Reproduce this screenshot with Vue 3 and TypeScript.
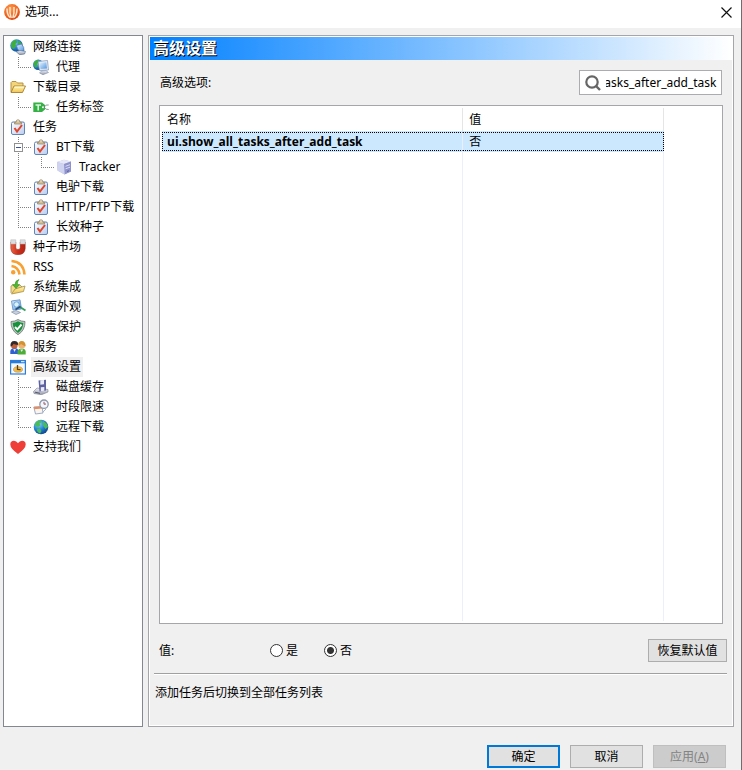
<script setup lang="ts">
import { computed, nextTick, onMounted, ref } from 'vue'

type Guide = 'none' | 'line' | 'tee' | 'end'
interface TreeItem {
  label: string
  icon: string
  guides: Guide[]
  expander?: boolean
}

const items: TreeItem[] = [
  { label: '网络连接', icon: 'network', guides: [] },
  { label: '代理', icon: 'proxy', guides: ['end'] },
  { label: '下载目录', icon: 'folder', guides: [] },
  { label: '任务标签', icon: 'tag', guides: ['end'] },
  { label: '任务', icon: 'task', guides: [] },
  { label: 'BT下载', icon: 'task', guides: ['tee'], expander: true },
  { label: 'Tracker', icon: 'server', guides: ['line', 'end'] },
  { label: '电驴下载', icon: 'task', guides: ['tee'] },
  { label: 'HTTP/FTP下载', icon: 'task', guides: ['tee'] },
  { label: '长效种子', icon: 'task', guides: ['end'] },
  { label: '种子市场', icon: 'magnet', guides: [] },
  { label: 'RSS', icon: 'rss', guides: [] },
  { label: '系统集成', icon: 'integrate', guides: [] },
  { label: '界面外观', icon: 'appearance', guides: [] },
  { label: '病毒保护', icon: 'shield', guides: [] },
  { label: '服务', icon: 'users', guides: [] },
  { label: '高级设置', icon: 'advanced', guides: [] },
  { label: '磁盘缓存', icon: 'disk', guides: ['tee'] },
  { label: '时段限速', icon: 'schedule', guides: ['tee'] },
  { label: '远程下载', icon: 'globe', guides: ['end'] },
  { label: '支持我们', icon: 'heart', guides: [] },
]

const options = [{ name: 'ui.show_all_tasks_after_add_task', hint: '添加任务后切换到全部任务列表' }]
const selected = ref('高级设置')
const filter = ref('ui.show_all_tasks_after_add_task')
const value = ref<'是' | '否'>('否')
const filterBox = ref<HTMLInputElement | null>(null)
const matches = computed(() => options.filter((o) => o.name.includes(filter.value)))

onMounted(async () => {
  await nextTick()
  if (filterBox.value) filterBox.value.scrollLeft = filterBox.value.scrollWidth
})
</script>

<template>
  <div class="window">
    <svg class="defs" width="0" height="0" aria-hidden="true">
      <defs>
        <radialGradient id="g-globe" cx=".35" cy=".3" r=".8">
          <stop offset="0" stop-color="#8fd4fb" /><stop offset=".5" stop-color="#2383d6" /><stop offset="1" stop-color="#0d3a80" />
        </radialGradient>
        <linearGradient id="g-folder" x1="0" y1="0" x2="0" y2="1">
          <stop offset="0" stop-color="#fff6b8" /><stop offset="1" stop-color="#f1c34e" />
        </linearGradient>
        <linearGradient id="g-paper" x1="0" y1="0" x2="1" y2="1">
          <stop offset="0" stop-color="#ffffff" /><stop offset="1" stop-color="#b9cdf0" />
        </linearGradient>
        <linearGradient id="g-screen" x1="0" y1="0" x2="1" y2="1">
          <stop offset="0" stop-color="#e6f3ff" /><stop offset="1" stop-color="#4f95e0" />
        </linearGradient>
        <linearGradient id="g-metal" x1="0" y1="0" x2="0" y2="1">
          <stop offset="0" stop-color="#f4f4f8" /><stop offset="1" stop-color="#9598a8" />
        </linearGradient>
        <radialGradient id="g-orange" cx=".4" cy=".3" r=".8">
          <stop offset="0" stop-color="#ff9a4a" /><stop offset=".7" stop-color="#ee5a17" /><stop offset="1" stop-color="#c53c0c" />
        </radialGradient>
        <linearGradient id="g-red" x1="0" y1="0" x2="1" y2="0">
          <stop offset="0" stop-color="#ee6244" /><stop offset=".5" stop-color="#c9301c" /><stop offset="1" stop-color="#b52414" />
        </linearGradient>
      </defs>
      <symbol id="i-network" viewBox="0 0 16 16">
        <circle cx="6.500" cy="6.500" r="6.200" fill="url(#g-globe)" />
        <path d="M1 5Q2 1.500 6 .8L7.500 3 5.500 5 6 7 4 10 1.500 9ZM9 1.500L12 5 10 6 8 4.500Z" fill="#3fae3c" />
        <path d="M6.500 6.500L11.500 5Q14.500 8 14 12L9.500 12.500Q7 10 6.500 6.500Z" fill="url(#g-screen)" stroke="#4f78ac" stroke-width=".7" />
        <path d="M6 12.500L10 11.500 15.500 12.500 14.500 15 9.500 15.700Z" fill="url(#g-metal)" stroke="#47688f" stroke-width=".6" />
      </symbol>
      <symbol id="i-proxy" viewBox="0 0 16 16">
        <circle cx="5.200" cy="5.800" r="5.200" fill="url(#g-globe)" />
        <path d="M.5 4.500Q2 .8 5.500 .8L6 3 4 5 4.500 8 2 8.500Z" fill="#3fae3c" />
        <path d="M5 2.500L14.500 1.500 15.500 11 6.500 11.500Z" fill="#e4ebf5" stroke="#7c93b8" stroke-width=".7" />
        <path d="M6.500 4L13.300 3.200 14 9.500 7.500 10Z" fill="url(#g-screen)" />
        <path d="M8.500 12L13 11.500 15.500 13.500 10 15.700 6.500 14Z" fill="url(#g-metal)" stroke="#6b83a8" stroke-width=".5" />
      </symbol>
      <symbol id="i-folder" viewBox="0 0 16 16">
        <path d="M1 13V3.500L2 2.500H6L7.500 4H13V7" fill="#f4d67a" stroke="#b08a3a" stroke-width=".9" />
        <path d="M1 13.500L4 7H15.500L12.500 13.500Z" fill="url(#g-folder)" stroke="#a87e2c" stroke-width=".9" />
        <path d="M4.700 8H14" stroke="#fffbd2" />
      </symbol>
      <symbol id="i-tag" viewBox="0 0 16 16">
        <path d="M.3 3.500H9L12 6V10.500L9 13H.3Z" fill="#35b044" />
        <path d="M2.500 6H8M5.200 6V11.500" fill="none" stroke="#d9f5dc" stroke-width="1.600" />
        <circle cx="10" cy="8.300" r="1" fill="#fff" />
        <path d="M11 8.300Q13 5 15.700 6M11 8.300Q13 11 15.700 10.500" fill="none" stroke="#6f8078" stroke-width=".8" />
      </symbol>
      <symbol id="i-task" viewBox="0 0 16 16">
        <rect x="1.500" y="3" width="13" height="12.500" rx="1.500" fill="url(#g-paper)" stroke="#6384b6" />
        <path d="M4.500 5V3.300H6Q6 .7 8 .7T10 3.300H11.500V5Z" fill="#d3c29a" stroke="#92805d" stroke-width=".7" />
        <path d="M7.500 2H8.500" stroke="#fff" />
        <path d="M4.500 9L7 12.500 12 6" fill="none" stroke="#e0452a" stroke-width="2" />
      </symbol>
      <symbol id="i-server" viewBox="0 0 16 16">
        <path d="M1 3L8 .8 15 2.500V12.500L8.500 15.500 1.500 11.500Z" fill="#b5b9e2" />
        <path d="M1 3L8 .8 15 2.500 8 5Z" fill="#e6e8f8" />
        <path d="M8 5L15 2.500V12.500L8.500 15.500Z" fill="#8f93cb" />
        <path d="M1 3L8 5 8.500 15.500 1.500 11.500Z" fill="#d0d3ef" />
        <path d="M9.500 7.300L14 5.700M9.500 9.800L14 8.200" stroke="#ececff" stroke-width=".8" />
        <path d="M11 12.500L13 11.700" stroke="#5b5ba8" />
      </symbol>
      <symbol id="i-magnet" viewBox="0 0 16 16">
        <path d="M.8 3H5.800V9Q6 10.500 8 10.500T10.200 9V3H15.200V9.500Q14.800 15.700 8 15.700T.8 9.500Z" fill="url(#g-red)" stroke="#8e2015" stroke-width=".5" />
        <path d="M.8 .8H5.800V5H.8ZM10.200 .8H15.200V5H10.200Z" fill="#dcdde0" stroke="#b3b4b8" stroke-width=".5" />
      </symbol>
      <symbol id="i-rss" viewBox="0 0 16 16">
        <g fill="none" stroke="#f8a032" stroke-width="2.600">
          <path d="M1.500 2Q13.500 3 14.500 15.500" /><path d="M1.500 7Q8.500 8 9.500 15.500" />
        </g>
        <circle cx="3.200" cy="13.300" r="2.200" fill="#f8a032" />
      </symbol>
      <symbol id="i-integrate" viewBox="0 0 16 16">
        <path d="M1 14V7L3 6 5 7 10 6 12 8" fill="#f3dc8c" stroke="#a48e4a" stroke-width=".8" />
        <path d="M1.500 15L5 10 15 7 13.500 12.500Z" fill="url(#g-folder)" stroke="#a48e4a" stroke-width=".8" />
        <path d="M9 .5Q5 1.500 5 5.500H2.500L6 9.500 9.500 5.500H7.300Q7.300 2.500 9 .5Z" fill="#4bb82e" stroke="#2b851c" stroke-width=".5" />
      </symbol>
      <symbol id="i-appearance" viewBox="0 0 16 16">
        <path d="M1.500 2L10 .8 11.500 10 3 11Z" fill="url(#g-screen)" stroke="#6a96c8" stroke-width=".9" />
        <path d="M1.500 13L6 11.500 10.500 13.500 6 15.500Z" fill="#c9d1de" stroke="#7c8ca5" stroke-width=".7" />
        <circle cx="6.500" cy="5.500" r="2.700" fill="#d8f2ff" stroke="#5f95c6" stroke-width=".8" />
        <path d="M10 8L15.500 11.500" stroke="#35a05c" stroke-width="2" />
        <path d="M5.500 10.500L10.500 7.500" stroke="#2a4f78" stroke-width="1.500" />
      </symbol>
      <symbol id="i-shield" viewBox="0 0 16 16">
        <path d="M8 .5Q11 2.500 15 2.500Q15.200 11.500 8 15.700Q.8 11.500 1 2.500Q5 2.500 8 .5Z" fill="#bcc5c0" stroke="#67766e" stroke-width=".8" />
        <path d="M8 2.300Q10.500 3.800 13.300 4Q13 10.500 8 14Q3 10.500 2.700 4Q5.500 3.800 8 2.300Z" fill="#18903c" />
        <path d="M5 8L7.300 10.300 11.500 5.500" fill="none" stroke="#fff" stroke-width="1.900" />
      </symbol>
      <symbol id="i-users" viewBox="0 0 16 16">
        <path d="M.3 15V12Q1 9 4.500 9T8.500 12V15Z" fill="#2f61cf" />
        <path d="M7.500 15.500V12.500Q8 9.500 11.700 9.500T15.700 12.500V15.500Z" fill="#4cae36" />
        <circle cx="4.300" cy="6.500" r="3.300" fill="#c0603a" />
        <path d="M.5 7.500Q0 2 4.300 2T8 6Q5 5.500 3.500 5Q2.500 7 .5 7.500Z" fill="#33292b" />
        <circle cx="11.800" cy="6.500" r="3.300" fill="#efb274" />
        <path d="M8.200 6.500Q8 2 11.800 2T15.700 7.500Q13 6 11 5Q10 6.500 8.200 6.500Z" fill="#d2922f" />
        <path d="M3.200 10L4.500 13 6 10M10.200 10.500L11.700 13 13.200 10.500" fill="#dce8ff" />
      </symbol>
      <symbol id="i-advanced" viewBox="0 0 16 16">
        <rect x=".6" y="1.500" width="14.800" height="13.500" fill="#f5f9ff" stroke="#2f7ed6" stroke-width="1.200" />
        <path d="M0 1H16V4.300H0Z" fill="#2a7cda" />
        <path d="M11 2.600H14.500" stroke="#cfe5ff" stroke-width="1.300" />
        <ellipse cx="8" cy="10.500" rx="4.500" ry="2.800" fill="#f3bb4a" stroke="#a97f2c" stroke-width=".5" />
        <path d="M7.500 6V10.500L10.500 10.700" fill="none" stroke="#5c4213" stroke-width="1.300" />
      </symbol>
      <symbol id="i-disk" viewBox="0 0 16 16">
        <path d="M.5 12.500L4 9 15 10.500V13L8.500 15.700 1 14.500Z" fill="url(#g-metal)" stroke="#7b7f90" stroke-width=".6" />
        <path d="M5.500 1.500L13 .8V11.500L6.500 12.500Z" fill="#5f63a0" />
        <path d="M7.300 1.300L11 1V5.300L7.300 5.700ZM7.800 12.300V8.300L11.300 7.900V11.800Z" fill="#e9ebf8" />
        <path d="M2 13.200L7 14.300" stroke="#565b70" />
      </symbol>
      <symbol id="i-schedule" viewBox="0 0 16 16">
        <path d="M.8 8L9 7.500 10 14 2.500 15Z" fill="#fbf5f0" stroke="#8597b8" stroke-width=".8" />
        <path d="M.8 8L9 7.500 9.300 9.500 1.200 10.300Z" fill="#ec8b5a" />
        <circle cx="11" cy="5.200" r="4.200" fill="#f4f7fc" stroke="#8e98ab" stroke-width="1.300" />
        <path d="M11 2.800V5.200L13 5" fill="none" stroke="#9a5560" />
        <path d="M10 13L13 10" stroke="#a9b2c6" />
      </symbol>
      <symbol id="i-globe" viewBox="0 0 16 16">
        <circle cx="8" cy="8" r="7.300" fill="url(#g-globe)" />
        <path d="M1.500 6Q3 1.500 7.500 1L9 3 6.500 4.500 7.500 6.500 5 8 3.500 7.500ZM10 2Q14.500 4 15 8L12.500 10 10 6.500ZM3.500 10.500L7 9.500 8.500 12 7 14.700Q4.500 14 3.500 10.500Z" fill="#4bbd58" />
      </symbol>
      <symbol id="i-heart" viewBox="0 0 16 16">
        <path d="M8 15Q.3 9.500 .3 5.500Q.3 1.800 4 1.800Q6.500 1.800 8 4.300Q9.500 1.800 12 1.800Q15.700 1.800 15.700 5.500Q15.700 9.500 8 15Z" fill="#ee3e37" />
      </symbol>
    </svg>

    <header class="titlebar">
      <svg class="app-icon" viewBox="0 0 16 16" aria-hidden="true">
        <circle cx="8" cy="8" r="7.900" fill="url(#g-orange)" />
        <path d="M3 4.500Q3 11 6 13.500M6 3Q5.500 9 7.200 14M10 3Q10.500 9 8.800 14M13 4.500Q13 11 10 13.500" fill="none" stroke="#ffe6cf" stroke-width="1.500" />
      </svg>
      <h1 class="title">选项...</h1>
      <button class="close" type="button" aria-label="关闭">
        <svg viewBox="0 0 11 11" aria-hidden="true"><path d="M.5 .5L10.500 10.500M10.500 .5L.5 10.500" stroke="#111" stroke-width="1.200" /></svg>
      </button>
    </header>

    <div class="content">
      <nav class="tree" aria-label="选项">
        <ul role="tree">
          <li
            v-for="item in items"
            :key="item.label"
            class="node"
            role="treeitem"
            :aria-level="item.guides.length + 1"
            :aria-selected="item.label === selected"
            @click="selected = item.label"
          >
            <svg v-for="(guide, n) in item.guides" :key="n" class="guide" viewBox="0 0 23 20" aria-hidden="true">
              <path v-if="guide === 'end'" d="M8.500 0V11" />
              <path v-else d="M8.500 0V20" />
              <path v-if="guide !== 'line'" d="M8 10.500H21" />
              <g v-if="item.expander" class="expander">
                <rect x="4.500" y="6.500" width="8" height="8" />
                <path d="M6 10.500H11" />
              </g>
            </svg>
            <svg class="icon" viewBox="0 0 16 16" aria-hidden="true"><use :href="'#i-' + item.icon" /></svg>
            <span class="label" :class="{ current: item.label === selected }">{{ item.label }}</span>
          </li>
        </ul>
      </nav>

      <main class="panel">
        <h2 class="banner">高级设置</h2>
        <div class="search-row">
          <label for="filter">高级选项:</label>
          <div class="search">
            <svg viewBox="0 0 16 16" aria-hidden="true">
              <circle cx="7" cy="7" r="5.700" fill="none" stroke="#666" stroke-width="2.200" />
              <path d="M11 11L15 15" stroke="#666" stroke-width="2.400" />
            </svg>
            <input id="filter" ref="filterBox" v-model="filter" type="text" spellcheck="false" />
          </div>
        </div>

        <div class="grid">
          <table>
            <colgroup><col class="c-name" /><col class="c-value" /><col /></colgroup>
            <thead>
              <tr><th scope="col">名称</th><th scope="col">值</th><td></td></tr>
            </thead>
            <tbody>
              <tr v-for="option in matches" :key="option.name" class="picked">
                <td class="name">{{ option.name }}</td>
                <td class="val">{{ value }}</td>
                <td></td>
              </tr>
              <tr class="filler"><td></td><td></td><td></td></tr>
            </tbody>
          </table>
        </div>

        <div class="value-row">
          <span id="value-label" class="value-label">值:</span>
          <div class="radios" role="radiogroup" aria-labelledby="value-label">
            <label><input v-model="value" type="radio" name="value" value="是" />是</label>
            <label><input v-model="value" type="radio" name="value" value="否" />否</label>
          </div>
          <button class="button reset" type="button" @click="value = '否'">恢复默认值</button>
        </div>
        <p class="hint">{{ options[0].hint }}</p>
      </main>
    </div>

    <footer class="actions">
      <button class="button primary" type="button">确定</button>
      <button class="button" type="button">取消</button>
      <button class="button" type="button" disabled>应用(<u>A</u>)</button>
    </footer>
  </div>
</template>

<style>
body {
  margin: 0;
  background: #f0f0f0;
}
</style>

<style scoped>
.window {
  box-sizing: border-box;
  display: flex;
  flex-direction: column;
  min-height: 100vh;
  border-right: 1px solid #6e6e6e;
  background: #f0f0f0;
  color: #000;
  font: 12px/20px "Noto Sans", "Noto Sans CJK SC", sans-serif;
}
.defs {
  position: absolute;
}
.titlebar {
  box-sizing: border-box;
  display: flex;
  align-items: center;
  gap: 5px;
  height: 28px;
  padding: 0 9px 4px 4px;
  background: #fff;
}
.app-icon {
  width: 16px;
  height: 16px;
}
.title {
  margin: 0;
  font-size: 12px;
  font-weight: 400;
}
.close {
  display: flex;
  margin-left: auto;
  padding: 0;
  border: 0;
  background: none;
}
.close svg {
  width: 11px;
  height: 11px;
}
.content {
  flex: 1;
  display: flex;
  gap: 5px;
  padding: 7px 7px 0 3px;
}
.tree {
  box-sizing: border-box;
  flex: 0 0 140px;
  padding: 1px 0 0 6px;
  border: 1px solid #828790;
  background: #fff;
}
.tree ul {
  margin: 0;
  padding: 0;
  list-style: none;
}
.node {
  display: flex;
  align-items: center;
  height: 20px;
  white-space: nowrap;
}
.guide {
  flex: none;
  width: 23px;
  height: 20px;
  fill: none;
  stroke: #808080;
  stroke-dasharray: 1 1;
  shape-rendering: crispEdges;
}
.expander {
  fill: #fff;
  stroke: #919191;
  stroke-dasharray: none;
}
.expander path {
  stroke: #3a4fa0;
}
.icon {
  flex: none;
  width: 16px;
  height: 16px;
}
.label {
  margin-left: 5px;
  padding: 0 2px;
}
.label.current {
  background: #f0f0f0;
}
.panel {
  flex: 1;
  min-width: 0;
  display: flex;
  flex-direction: column;
  border: 1px solid #a5a5aa;
  box-shadow: inset 0 0 0 1px #fff;
  padding: 1px;
}
.banner {
  margin: 0;
  padding-left: 3px;
  background: linear-gradient(90deg, #0080ff, #fff);
  color: #fff;
  font-size: 16px;
  font-weight: 700;
  line-height: 23px;
  text-shadow: 1px 1px 0 #000;
}
.search-row {
  display: flex;
  align-items: center;
  justify-content: space-between;
  padding: 10px;
}
.search {
  box-sizing: border-box;
  display: flex;
  align-items: center;
  gap: 5px;
  width: 143px;
  height: 25px;
  padding: 0 4px 0 5px;
  border: 1px solid #ababb0;
  background: #fff;
}
.search svg {
  flex: none;
  width: 16px;
  height: 16px;
}
.search input {
  flex: 1;
  min-width: 0;
  padding: 0;
  border: 0;
  outline: 0;
  background: none;
  color: #000;
  font: inherit;
}
.grid {
  flex: 1;
  display: flex;
  margin: 0 9px;
  padding: 2px;
  border: 1px solid #a5a5aa;
  background: #fff;
}
table {
  flex: 1;
  table-layout: fixed;
  border-collapse: separate;
  border-spacing: 0;
}
.c-name {
  width: 54%;
}
.c-value {
  width: 36%;
}
th,
td {
  box-sizing: border-box;
  padding: 0 6px;
  border: 0 solid #e8f1fb;
  border-right-width: 1px;
  text-align: left;
  font-weight: 400;
}
th {
  height: 24px;
  border-color: #e5e5e5;
}
th:first-child {
  padding-left: 5px;
}
tr > :last-child {
  border-right: 0;
}
.picked td {
  height: 19px;
  line-height: 17px;
}
.picked .name,
.picked .val {
  border-top: 1px dotted #000;
  border-bottom: 1px dotted #000;
  background: #cce8ff;
  box-shadow: 0 -1px #cce8ff, 0 1px #cce8ff;
}
.picked .name {
  padding-left: 4px;
  border-left: 1px dotted #000;
  font-weight: 700;
  font-family: "Open Sans", "Noto Sans CJK SC", sans-serif;
}
.picked .val {
  border-right: 1px dotted #000;
}
.filler td {
  height: 100%;
}
.value-row {
  display: flex;
  align-items: center;
  margin: 15px 5px 11px 9px;
}
.value-label {
  width: 111px;
}
.radios {
  display: flex;
  gap: 26px;
}
.radios label {
  display: flex;
  align-items: center;
  gap: 3px;
}
.radios input {
  appearance: none;
  box-sizing: border-box;
  width: 13px;
  height: 13px;
  margin: 0;
  border: 1px solid #333;
  border-radius: 50%;
  background: #fff;
}
.radios input:checked {
  background: radial-gradient(circle, #333 3px, #fff 4px);
}
.button {
  box-sizing: border-box;
  width: 73px;
  height: 23px;
  padding: 0;
  border: 1px solid #adadad;
  background: #e1e1e1;
  color: #000;
  font: inherit;
}
.button.reset {
  width: 79px;
  margin-left: auto;
}
.button.primary {
  border: 2px solid #0078d7;
}
.button:disabled {
  border-color: #bfbfbf;
  background: #ccc;
  color: #838383;
}
.hint {
  margin: 0 5px 22px 4px;
  padding: 9px 0 0 1px;
  border-top: 1px solid #a0a0a0;
  box-shadow: inset 0 1px #fff;
}
.actions {
  display: flex;
  justify-content: flex-end;
  gap: 10px;
  padding: 18px 15px 2px;
}
</style>
